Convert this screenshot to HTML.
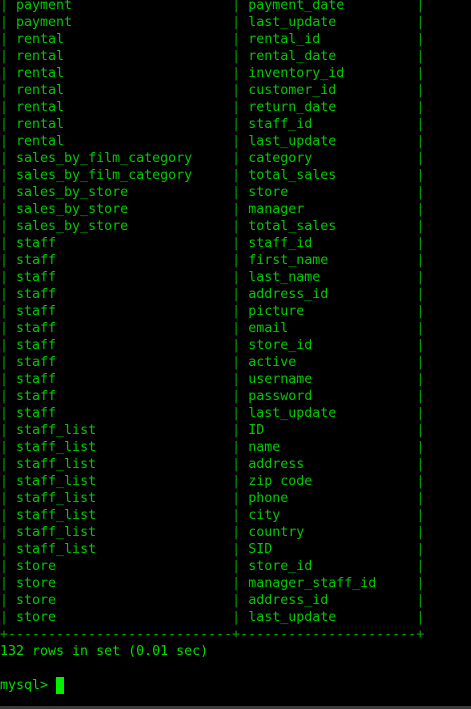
<!DOCTYPE html>
<html><head><style>
html,body{margin:0;padding:0;background:#000;width:471px;height:709px;overflow:hidden}
pre{position:absolute;left:0;top:-3px;margin:0;font-family:"DejaVu Sans Mono","Liberation Mono",monospace;font-size:13.3px;line-height:17px;color:#00c800;white-space:pre}
.b{color:#00a800}
.c{display:inline-block;width:8px;height:17px;background:#00f000;vertical-align:top}
.bar{position:absolute;left:0;top:706px;width:471px;height:3px;background:#3c3c3c}
</style></head><body>
<pre><span class="b">|</span> payment                    <span class="b">|</span> payment_date         <span class="b">|</span>
<span class="b">|</span> payment                    <span class="b">|</span> last_update          <span class="b">|</span>
<span class="b">|</span> rental                     <span class="b">|</span> rental_id            <span class="b">|</span>
<span class="b">|</span> rental                     <span class="b">|</span> rental_date          <span class="b">|</span>
<span class="b">|</span> rental                     <span class="b">|</span> inventory_id         <span class="b">|</span>
<span class="b">|</span> rental                     <span class="b">|</span> customer_id          <span class="b">|</span>
<span class="b">|</span> rental                     <span class="b">|</span> return_date          <span class="b">|</span>
<span class="b">|</span> rental                     <span class="b">|</span> staff_id             <span class="b">|</span>
<span class="b">|</span> rental                     <span class="b">|</span> last_update          <span class="b">|</span>
<span class="b">|</span> sales_by_film_category     <span class="b">|</span> category             <span class="b">|</span>
<span class="b">|</span> sales_by_film_category     <span class="b">|</span> total_sales          <span class="b">|</span>
<span class="b">|</span> sales_by_store             <span class="b">|</span> store                <span class="b">|</span>
<span class="b">|</span> sales_by_store             <span class="b">|</span> manager              <span class="b">|</span>
<span class="b">|</span> sales_by_store             <span class="b">|</span> total_sales          <span class="b">|</span>
<span class="b">|</span> staff                      <span class="b">|</span> staff_id             <span class="b">|</span>
<span class="b">|</span> staff                      <span class="b">|</span> first_name           <span class="b">|</span>
<span class="b">|</span> staff                      <span class="b">|</span> last_name            <span class="b">|</span>
<span class="b">|</span> staff                      <span class="b">|</span> address_id           <span class="b">|</span>
<span class="b">|</span> staff                      <span class="b">|</span> picture              <span class="b">|</span>
<span class="b">|</span> staff                      <span class="b">|</span> email                <span class="b">|</span>
<span class="b">|</span> staff                      <span class="b">|</span> store_id             <span class="b">|</span>
<span class="b">|</span> staff                      <span class="b">|</span> active               <span class="b">|</span>
<span class="b">|</span> staff                      <span class="b">|</span> username             <span class="b">|</span>
<span class="b">|</span> staff                      <span class="b">|</span> password             <span class="b">|</span>
<span class="b">|</span> staff                      <span class="b">|</span> last_update          <span class="b">|</span>
<span class="b">|</span> staff_list                 <span class="b">|</span> ID                   <span class="b">|</span>
<span class="b">|</span> staff_list                 <span class="b">|</span> name                 <span class="b">|</span>
<span class="b">|</span> staff_list                 <span class="b">|</span> address              <span class="b">|</span>
<span class="b">|</span> staff_list                 <span class="b">|</span> zip code             <span class="b">|</span>
<span class="b">|</span> staff_list                 <span class="b">|</span> phone                <span class="b">|</span>
<span class="b">|</span> staff_list                 <span class="b">|</span> city                 <span class="b">|</span>
<span class="b">|</span> staff_list                 <span class="b">|</span> country              <span class="b">|</span>
<span class="b">|</span> staff_list                 <span class="b">|</span> SID                  <span class="b">|</span>
<span class="b">|</span> store                      <span class="b">|</span> store_id             <span class="b">|</span>
<span class="b">|</span> store                      <span class="b">|</span> manager_staff_id     <span class="b">|</span>
<span class="b">|</span> store                      <span class="b">|</span> address_id           <span class="b">|</span>
<span class="b">|</span> store                      <span class="b">|</span> last_update          <span class="b">|</span>
<span class="b">+----------------------------+----------------------+</span>
<span style="color:#00dc00">132 rows in set (0.01 sec)</span>

<span style="color:#00dc00">mysql&gt; </span><span class="c"></span></pre>
<div class="bar"></div>
</body></html>
